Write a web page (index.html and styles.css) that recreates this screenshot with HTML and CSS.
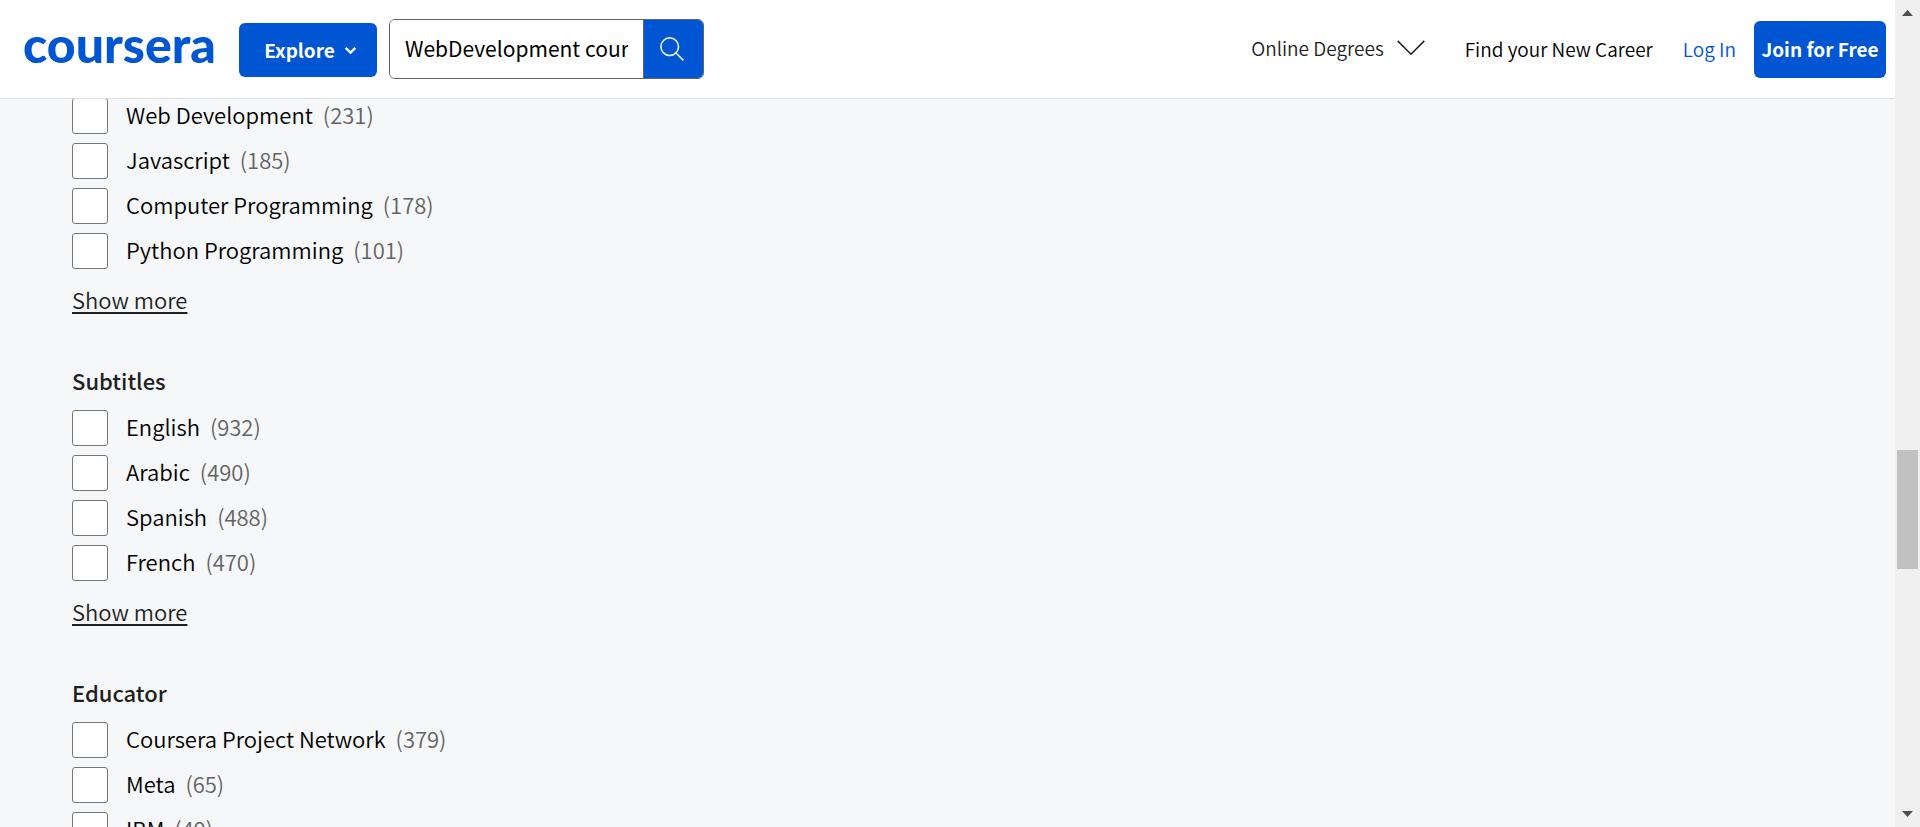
FILE: index.html
```html
<!DOCTYPE html>
<html lang="en">
<head>
<meta charset="utf-8">
<title>Coursera search</title>
<link rel="stylesheet" href="styles.css">
</head>
<body>
<div class="page">
  <header class="header">
    <a class="logo" href="#">coursera</a>
    <button class="btn explore" type="button">Explore
      <svg class="explore-icon" viewBox="0 0 12 10" aria-hidden="true"><path d="M1.500 2.500 6 7l4.500-4.500" fill="none" stroke="currentColor" stroke-width="2.200"/></svg>
    </button>
    <form class="search">
      <input class="search-input" type="text" aria-label="Search" value="WebDevelopment courses">
      <button class="search-btn" type="button" aria-label="Submit search">
        <svg class="search-icon" viewBox="0 0 24 24" aria-hidden="true"><g fill="none" stroke="currentColor" stroke-width="1.700"><circle cx="9.700" cy="9.700" r="8.800"/><path d="m16 16 7.400 7.400"/></g></svg>
      </button>
    </form>
    <nav class="nav">
      <button class="degrees" type="button">Online Degrees
        <svg class="degrees-icon" viewBox="0 0 28 16" aria-hidden="true"><path d="m.7.9 13.300 13.300L27.300.9" fill="none" stroke="currentColor" stroke-width="1.500"/></svg>
      </button>
      <a class="career" href="#">Find your New Career</a>
      <a class="login" href="#">Log In</a>
      <a class="btn join" href="#">Join for Free</a>
    </nav>
  </header>
  <main class="filters">
    <section class="group">
      <label class="option"><input class="box" type="checkbox"><span>Web Development</span><span class="count">(231)</span></label>
      <label class="option"><input class="box" type="checkbox"><span>Javascript</span><span class="count">(185)</span></label>
      <label class="option"><input class="box" type="checkbox"><span>Computer Programming</span><span class="count">(178)</span></label>
      <label class="option"><input class="box" type="checkbox"><span>Python Programming</span><span class="count">(101)</span></label>
      <button class="more" type="button">Show more</button>
    </section>
    <section class="group">
      <h2 class="title">Subtitles</h2>
      <label class="option"><input class="box" type="checkbox"><span>English</span><span class="count">(932)</span></label>
      <label class="option"><input class="box" type="checkbox"><span>Arabic</span><span class="count">(490)</span></label>
      <label class="option"><input class="box" type="checkbox"><span>Spanish</span><span class="count">(488)</span></label>
      <label class="option"><input class="box" type="checkbox"><span>French</span><span class="count">(470)</span></label>
      <button class="more" type="button">Show more</button>
    </section>
    <section class="group">
      <h2 class="title">Educator</h2>
      <label class="option"><input class="box" type="checkbox"><span>Coursera Project Network</span><span class="count">(379)</span></label>
      <label class="option"><input class="box" type="checkbox"><span>Meta</span><span class="count">(65)</span></label>
      <label class="option"><input class="box" type="checkbox"><span>IBM</span><span class="count">(49)</span></label>
    </section>
  </main>
</div>
<div class="scrollbar" aria-hidden="true">
  <svg class="arrow" viewBox="0 0 11 6"><path d="M0 6 5.500 0 11 6z" fill="#505050"/></svg>
  <div class="track"><div class="thumb"></div></div>
  <svg class="arrow" viewBox="0 0 11 6"><path d="M0 0 5.500 6 11 0z" fill="#505050"/></svg>
</div>
</body>
</html>
```
FILE: styles.css
```css
* {
  box-sizing: border-box;
}

body {
  display: flex;
  height: 100vh;
  margin: 0;
  overflow: hidden;
  background: #f5f7f9;
  color: #000;
  font-family: "Noto Sans CJK SC", "Noto Sans", sans-serif;
  font-size: 22px;
  font-weight: 350;
  line-height: 32px;
}

button,
input {
  margin: 0;
  font: inherit;
  color: inherit;
}

button {
  padding: 0;
  border: 0;
  background: none;
  cursor: pointer;
}

a {
  color: inherit;
  text-decoration: none;
}

.page {
  flex: 1;
  display: flex;
  flex-direction: column;
  min-width: 0;
}

.header {
  position: relative;
  z-index: 1;
  flex: none;
  display: flex;
  align-items: center;
  height: 99px;
  padding: 0 9px 0 23px;
  background: #fff;
  border-bottom: 1px solid #dfdfdf;
}

.logo {
  width: 216px;
  padding-bottom: 10px;
  color: #0056d2;
  font-family: Lato, sans-serif;
  font-size: 50px;
  font-weight: 900;
  line-height: 56px;
}

.btn {
  display: flex;
  align-items: center;
  justify-content: center;
  border-radius: 6px;
  background: #0056d2;
  color: #fff;
  font-weight: 700;
}

.explore {
  gap: 9px;
  width: 138px;
  height: 54px;
  margin-top: 2px;
  padding-left: 5px;
  font-size: 19px;
}

.explore-icon {
  width: 13px;
  height: 11px;
}

.search {
  display: flex;
  width: 315px;
  height: 60px;
  margin-left: 12px;
  border: 1px solid #636363;
  border-radius: 6px;
  overflow: hidden;
}

.search-input {
  flex: 1;
  min-width: 0;
  padding: 0 15px 3px;
  border: 0;
  outline: 0;
  background: #fff;
  font-size: 21px;
  font-weight: 400;
}

.search-btn {
  display: grid;
  place-items: center;
  width: 60px;
  padding-right: 4px;
  border-left: 1px solid #636363;
  background: #0056d2;
  color: #e6eefa;
}

.search-icon {
  width: 24px;
  height: 24px;
}

.nav {
  display: flex;
  align-items: center;
  margin-left: auto;
  font-size: 19px;
}

.degrees {
  display: flex;
  align-items: center;
  gap: 13px;
  margin-right: 40px;
  padding-bottom: 2px;
  color: #1f1f1f;
}

.degrees-icon {
  width: 28px;
  height: 16px;
}

.career {
  margin-right: 30px;
}

.login {
  margin-right: 18px;
  color: #0056d2;
}

.join {
  width: 132px;
  height: 57px;
}

.filters {
  flex: 1;
  min-height: 0;
  margin-top: -1px;
  padding-left: 72px;
  overflow: hidden;
}

.group {
  display: flex;
  flex-direction: column;
  align-items: flex-start;
  gap: 9px;
  margin-bottom: 50px;
}

.title {
  margin: 0;
  padding-bottom: 5px;
  color: #1f1f1f;
  font-size: 22px;
  font-weight: 500;
  line-height: 31px;
}

.option {
  display: flex;
  align-items: flex-start;
  height: 36px;
}

.box {
  appearance: none;
  width: 36px;
  height: 36px;
  margin: 0 18px 0 0;
  border: 1px solid #767676;
  border-radius: 3px;
  background: #fff;
}

.count {
  margin-left: 10px;
  color: #636363;
}

.more {
  margin-top: 5px;
  color: #1f1f1f;
  text-decoration: underline;
  text-decoration-thickness: 2px;
  text-underline-offset: 3px;
}

.scrollbar {
  flex: none;
  display: flex;
  flex-direction: column;
  align-items: center;
  justify-content: space-between;
  gap: 9px;
  width: 25px;
  padding: 10px 2px;
  background: #f0f0f0;
}

.arrow {
  width: 11px;
  height: 6px;
}

.track {
  flex: 1;
  display: flex;
  flex-direction: column;
  justify-content: flex-start;
  width: 100%;
  padding-top: 425px;
}

.thumb {
  height: 119px;
  background: #c1c1c1;
}
```
